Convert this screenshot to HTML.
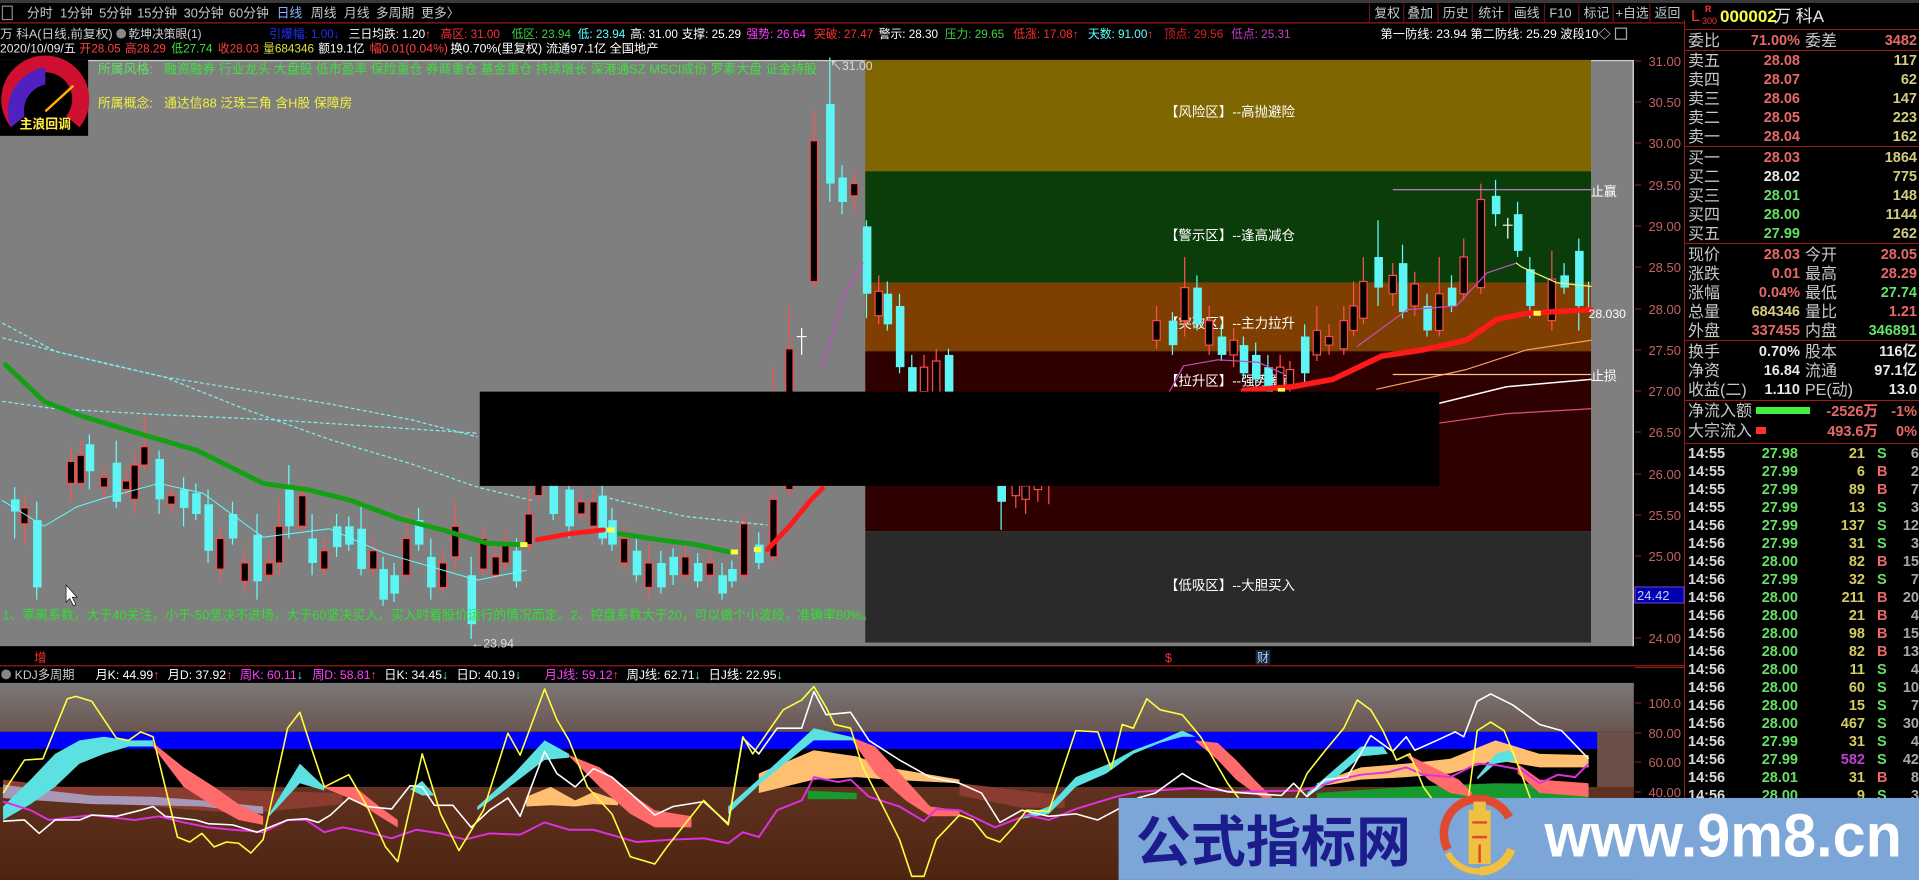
<!DOCTYPE html>
<html><head><meta charset="utf-8"><style>
html,body{margin:0;padding:0;background:#000;overflow:hidden}
svg{display:block}
text{font-family:"Liberation Sans","Noto Sans CJK SC",sans-serif}
.u{fill:#000;stroke:#ff4848;stroke-width:1}
.d{fill:#5ff5f5}
.lb{fill:#c8c8c8;font-size:16px}
.v{font-size:14.5px;font-weight:bold;text-anchor:end}
.r{fill:#e86868}.g{fill:#66e066}.y{fill:#d4cc80}.w{fill:#e8e8e8}
.ax{fill:#c86060;font-size:13px;text-anchor:end}
.t{font-size:14.5px;font-weight:bold}
</style></head><body>
<svg width="1919" height="880" viewBox="0 0 1919 880" xmlns="http://www.w3.org/2000/svg">
<rect width="1919" height="880" fill="#000"/>
<rect width="1919" height="3" fill="#3a3a3a"/>
<g transform="scale(1.22385)">
<!-- toolbar -->
<rect x="2" y="5" width="8" height="11" fill="none" stroke="#888" stroke-width="1"/>
<g font-size="10.5" fill="#c8c8c8">
<text x="22" y="14.5">分时</text><text x="49" y="14.5">1分钟</text><text x="81" y="14.5">5分钟</text><text x="112" y="14.5">15分钟</text><text x="150" y="14.5">30分钟</text><text x="187" y="14.5">60分钟</text><text x="226" y="14.5" fill="#8fb0ff">日线</text><text x="254" y="14.5">周线</text><text x="281" y="14.5">月线</text><text x="307" y="14.5">多周期</text><text x="344" y="14.5">更多〉</text>
<text x="1123" y="14.5">复权</text><text x="1150" y="14.5">叠加</text><text x="1179" y="14.5">历史</text><text x="1208" y="14.5">统计</text><text x="1237" y="14.5">画线</text><text x="1266" y="14.5">F10</text><text x="1294" y="14.5">标记</text><text x="1320" y="14.5">+自选</text><text x="1352" y="14.5">返回</text>
</g>
<g stroke="#701010" stroke-width="1"><path d="M1119 3V18M1147 3V18M1175 3V18M1203 3V18M1233 3V18M1262 3V18M1290 3V18M1318 3V18M1348 3V18"/></g>
<rect x="0" y="18.2" width="1377" height="1" fill="#a01818"/>
<!-- line 2 -->
<g font-size="9.6">
<text x="0" y="31" fill="#d0d0d0" textLength="92" lengthAdjust="spacingAndGlyphs">万 科A(日线,前复权)</text>
<circle cx="99" cy="27.5" r="4" fill="#888"/>
<text x="105" y="31" fill="#d0d0d0">乾坤决策眼(1)</text>
<text x="220" y="31" fill="#2030ff">引爆幅: 1.00↓</text>
<text x="285" y="31" fill="#fff">三日均跌: 1.20<tspan fill="#ff4040">↑</tspan></text>
<text x="360" y="31" fill="#ff3030">高区: 31.00</text>
<text x="418" y="31" fill="#40d040">低区: 23.94</text>
<text x="472" y="31" fill="#60ffff">低: 23.94</text>
<text x="515" y="31" fill="#fff">高: 31.00</text>
<text x="557" y="31" fill="#fff">支撑: 25.29</text>
<text x="610" y="31" fill="#ff40ff">强势: 26.64</text>
<text x="665" y="31" fill="#ff3030">突破: 27.47</text>
<text x="718" y="31" fill="#fff">警示: 28.30</text>
<text x="772" y="31" fill="#40d040">压力: 29.65</text>
<text x="828" y="31" fill="#ff3030">低涨: 17.08↑</text>
<text x="889" y="31" fill="#60ffff">天数: 91.00<tspan fill="#ff4040">↑</tspan></text>
<text x="951" y="31" fill="#e02020">顶点: 29.56</text>
<text x="1006" y="31" fill="#c040c0">低点: 25.31</text>
<text x="1128" y="31" fill="#fff" textLength="188" lengthAdjust="spacingAndGlyphs">第一防线: 23.94 第二防线: 25.29 波段10◇</text>
<rect x="1320" y="23" width="9" height="9" fill="none" stroke="#aaa"/>
</g>
<!-- line 3 -->
<g font-size="9.6">
<text x="0" y="43" fill="#e8e8e8" textLength="62" lengthAdjust="spacingAndGlyphs">2020/10/09/五</text>
<text x="65" y="43" fill="#ff4040">开28.05</text>
<text x="102" y="43" fill="#ff4040">高28.29</text>
<text x="140" y="43" fill="#40e040">低27.74</text>
<text x="178" y="43" fill="#ff4040">收28.03</text>
<text x="215" y="43" fill="#e0e040">量684346</text>
<text x="260" y="43" fill="#fff">额19.1亿</text>
<text x="302" y="43" fill="#ff4040" textLength="64" lengthAdjust="spacingAndGlyphs">幅0.01(0.04%)</text>
<text x="368" y="43" fill="#fff" textLength="75" lengthAdjust="spacingAndGlyphs">换0.70%(里复权)</text>
<text x="446" y="43" fill="#fff" textLength="92" lengthAdjust="spacingAndGlyphs">流通97.1亿 全国地产</text>
</g>
<!-- chart background -->
<rect x="0" y="49" width="1335" height="479" fill="#7f7f7f"/>
<rect x="0" y="49" width="1335" height="1" fill="#ccc"/>
<rect x="1334" y="49" width="1" height="479" fill="#ddd"/>
<rect x="0" y="49" width="72" height="62" fill="#000"/>
<!-- zones -->
<rect x="707" y="49" width="593" height="122" fill="#7f6600"/>
<rect x="707" y="140" width="593" height="91" fill="#0b3d0b"/>
<rect x="707" y="231" width="593" height="56" fill="#7f3f00"/>
<rect x="707" y="287" width="593" height="147" fill="#2e0000"/>
<rect x="707" y="434" width="593" height="91" fill="#2a2a2a"/>
<g fill="#fff" font-size="11" text-anchor="middle">
<text x="1005" y="95">【风险区】--高抛避险</text>
<text x="1005" y="196">【警示区】--逢高减仓</text>
<text x="1005" y="268">【突破区】--主力拉升</text>
<text x="1005" y="315">【拉升区】--强势蓄锐</text>
<text x="1005" y="482">【低吸区】--大胆买入</text>
</g>
<!-- dashed lines -->
<g fill="none" stroke="#7ff0f0" stroke-width="1" stroke-dasharray="3,2">
<polyline points="2,264 45,287 90,298 134,308 202,319 269,330 336,343 390,357"/>
<polyline points="2,276 45,287 134,308 202,335 269,359 336,379 390,398 435,409"/>
<polyline points="2,328 45,334 134,339 224,343 314,349 390,354"/>
<polyline points="493,406 560,422 627,429"/>
</g>
<!-- texts in chart -->
<text x="80" y="60" font-size="10.5" fill="#60e060">所属风格:</text>
<text x="134" y="60" font-size="10.5" fill="#40e040">融资融券 行业龙头 大盘股 低市盈率 保险重仓 券商重仓 基金重仓 持续增长 深港通SZ MSCI成份 罗素大盘 证金持股</text>
<text x="80" y="88" font-size="10.5" fill="#f0f040">所属概念:</text>
<text x="134" y="88" font-size="10.5" fill="#f0f040">通达信88 泛珠三角 含H股 保障房</text>
<!-- gauge -->
<path d="M9 104 A36 36 0 1 1 65 104 L54 95 A22 22 0 1 0 20 95 Z" fill="#d01030"/>
<path d="M9 104 A36 36 0 0 1 37 55 L37 69 A22 22 0 0 0 20 95 Z" fill="#5020c0"/>
<path d="M37 91 L60 70" stroke="#ffb000" stroke-width="2"/>
<text x="37" y="105" font-size="10.5" fill="#ffee40" text-anchor="middle" font-weight="bold">主浪回调</text>
<!-- wicks -->
<path stroke="#ff5050" stroke-width="1" fill="none" d="M20 405V445M58 365V410M66 360V400M85 380V410M103 383V405M110 370V420M118 340V385M140 395V420M180 430V475M200 450V485M220 450V475M228 410V470M247 395V435M265 440V470M305 440V470M332 420V475M362 450V485M372 410V465M395 430V470M405 445V475M413 435V465M432 400V450M440 360V410M475 400V425M485 400V435M510 430V465M530 445V490M560 445V475M580 450V478M608 420V475M632 300V460M645 250V405M665 90V235M698 140V175M718 225V265M755 290V330M765 285V330M830 385V415M838 390V420M848 388V410M857 390V412M945 250V285M968 210V275M988 250V290M1008 268V300M1046 290V325M1054 295V320M1076 250V295M1086 265V290M1098 250V290M1106 230V275M1114 210V265M1138 215V250M1156 222V258M1176 210V275M1196 195V245M1210 150V240M1268 205V270"/>
<path stroke="#60ffff" stroke-width="1" fill="none" d="M12 398V440M30 410V490M73 355V400M95 360V415M130 368V420M150 390V430M160 395V425M170 400V460M190 410V445M210 420V490M236 380V440M255 420V470M275 420V455M285 422V450M295 410V470M313 455V495M322 460V492M342 415V450M352 440V490M385 455V522M422 440V480M452 385V425M465 390V440M492 395V445M500 415V450M520 440V475M540 450V485M550 448V478M570 452V480M590 460V490M598 458V480M620 435V465M678 47V165M688 135V175M708 180V260M725 230V270M735 240V305M745 290V330M775 285V345M818 380V433M958 255V290M978 225V270M998 265V295M1016 275V310M1026 280V315M1036 290V325M1066 265V315M1126 180V250M1146 200V260M1166 240V275M1186 225V255M1222 147V185M1240 165V210M1250 210V260M1278 215V240M1290 195V270M1298 230V255"/>
<path stroke="#fff" d="M655 268V290M651 275H659M1232 178V195M1228 184H1236" fill="none"/>
<!-- up candles -->
<g class="u">
<rect x="17" y="415" width="6" height="13"/><rect x="55" y="377" width="6" height="18"/><rect x="63" y="372" width="6" height="23"/><rect x="82" y="390" width="6" height="8"/><rect x="100" y="393" width="6" height="7"/><rect x="107" y="380" width="6" height="28"/><rect x="115" y="365" width="6" height="15"/><rect x="137" y="405" width="6" height="7"/><rect x="177" y="440" width="6" height="25"/><rect x="197" y="460" width="6" height="15"/><rect x="217" y="460" width="6" height="10"/><rect x="225" y="430" width="6" height="30"/><rect x="244" y="405" width="6" height="25"/><rect x="262" y="450" width="6" height="15"/><rect x="302" y="450" width="6" height="15"/><rect x="329" y="440" width="6" height="30"/><rect x="359" y="460" width="6" height="20"/><rect x="369" y="430" width="6" height="25"/><rect x="392" y="440" width="6" height="25"/><rect x="402" y="455" width="6" height="15"/><rect x="410" y="445" width="6" height="15"/><rect x="429" y="420" width="6" height="25"/><rect x="437" y="385" width="6" height="20"/><rect x="472" y="410" width="6" height="10"/><rect x="482" y="410" width="6" height="20"/><rect x="507" y="440" width="6" height="20"/><rect x="527" y="460" width="6" height="20"/><rect x="557" y="455" width="6" height="15"/><rect x="577" y="460" width="6" height="10"/><rect x="605" y="428" width="6" height="42"/><rect x="629" y="408" width="6" height="47"/><rect x="642" y="285" width="6" height="115"/><rect x="662" y="115" width="6" height="115"/><rect x="695" y="150" width="6" height="10"/><rect x="715" y="238" width="6" height="20"/><rect x="752" y="300" width="6" height="20"/><rect x="762" y="295" width="6" height="30"/><rect x="827" y="395" width="6" height="10"/><rect x="835" y="397" width="6" height="11"/><rect x="845" y="395" width="6" height="5"/>
<rect x="942" y="262" width="6" height="16"/><rect x="965" y="235" width="6" height="27"/><rect x="985" y="262" width="6" height="20"/><rect x="1005" y="278" width="6" height="12"/><rect x="1043" y="300" width="6" height="18"/><rect x="1051" y="302" width="6" height="13"/><rect x="1073" y="270" width="6" height="20"/><rect x="1083" y="275" width="6" height="7"/><rect x="1095" y="262" width="6" height="23"/><rect x="1103" y="250" width="6" height="20"/><rect x="1111" y="230" width="6" height="30"/><rect x="1135" y="225" width="6" height="15"/><rect x="1153" y="232" width="6" height="18"/><rect x="1173" y="240" width="6" height="30"/><rect x="1193" y="210" width="6" height="30"/><rect x="1207" y="163" width="6" height="72"/><rect x="1265" y="228" width="6" height="34"/>
</g>
<!-- down candles -->
<g class="d">
<rect x="9" y="408" width="7" height="10"/><rect x="27" y="425" width="7" height="55"/><rect x="70" y="363" width="7" height="22"/><rect x="92" y="378" width="7" height="32"/><rect x="127" y="375" width="7" height="33"/><rect x="147" y="400" width="7" height="15"/><rect x="157" y="403" width="7" height="17"/><rect x="167" y="412" width="7" height="38"/><rect x="187" y="420" width="7" height="20"/><rect x="207" y="437" width="7" height="38"/><rect x="233" y="400" width="7" height="30"/><rect x="252" y="440" width="7" height="20"/><rect x="272" y="430" width="7" height="17"/><rect x="282" y="430" width="7" height="15"/><rect x="292" y="432" width="7" height="33"/><rect x="310" y="465" width="7" height="25"/><rect x="319" y="470" width="7" height="15"/><rect x="339" y="425" width="7" height="20"/><rect x="349" y="455" width="7" height="25"/><rect x="382" y="470" width="7" height="40"/><rect x="419" y="450" width="7" height="25"/><rect x="449" y="395" width="7" height="25"/><rect x="462" y="400" width="7" height="30"/><rect x="489" y="405" width="7" height="35"/><rect x="497" y="425" width="7" height="20"/><rect x="517" y="450" width="7" height="20"/><rect x="537" y="460" width="7" height="20"/><rect x="547" y="455" width="7" height="15"/><rect x="567" y="460" width="7" height="15"/><rect x="587" y="470" width="7" height="15"/><rect x="595" y="465" width="7" height="10"/><rect x="617" y="445" width="7" height="15"/><rect x="675" y="85" width="7" height="65"/><rect x="685" y="145" width="7" height="20"/><rect x="705" y="185" width="7" height="55"/><rect x="722" y="240" width="7" height="25"/><rect x="732" y="250" width="7" height="50"/><rect x="742" y="300" width="7" height="20"/><rect x="772" y="290" width="7" height="50"/><rect x="815" y="397" width="7" height="13"/>
<rect x="955" y="262" width="7" height="20"/><rect x="975" y="235" width="7" height="30"/><rect x="995" y="275" width="7" height="15"/><rect x="1013" y="282" width="7" height="23"/><rect x="1023" y="290" width="7" height="20"/><rect x="1033" y="300" width="7" height="20"/><rect x="1063" y="275" width="7" height="30"/><rect x="1123" y="210" width="7" height="25"/><rect x="1143" y="215" width="7" height="40"/><rect x="1163" y="250" width="7" height="20"/><rect x="1183" y="235" width="7" height="15"/><rect x="1219" y="160" width="7" height="15"/><rect x="1237" y="175" width="7" height="30"/><rect x="1247" y="220" width="7" height="30"/><rect x="1275" y="225" width="7" height="10"/><rect x="1287" y="205" width="7" height="45"/>
</g>
<!-- MA lines -->
<g fill="none" stroke-linejoin="round" stroke-linecap="round">
<polyline stroke="#60ffff" stroke-width="0.8" points="2,409 36,430 63,414 85,407 130,395 166,403 215,439 269,432 314,452 390,474 430,466"/>
<polyline stroke="#c050c0" stroke-width="1" points="955,321 967,299 995,294 1028,296 1048,305"/>
<polyline stroke="#c050c0" stroke-width="1" points="1109,283 1150,253 1190,250 1215,223 1239,215"/>
<polyline stroke="#f0f080" stroke-width="1" points="1239,215 1243,218 1272,231 1300,234"/>
<polyline stroke="#f0a060" stroke-width="1" points="1125,318 1198,302 1247,286 1300,278"/>
<polyline stroke="#ffffff" stroke-width="1.2" points="1174,330 1231,316 1300,310"/>
<polyline stroke="#e05080" stroke-width="1" points="1174,346 1231,338 1300,334"/>
<polyline stroke="#c050c0" stroke-width="1.2" points="672,300 690,240 705,215"/>
<polyline stroke="#14a014" stroke-width="4" points="4.5,298 36,328 67,340 116,355 161,368 215,395 251,400 287,409 327,424 358,432 399,444 426,445"/>
<polyline stroke="#ff1a1a" stroke-width="4" points="439,441 466,436 493,433"/>
<polyline stroke="#14a014" stroke-width="4" points="506,436 538,441 569,445 596,451"/>
<polyline stroke="#ff1a1a" stroke-width="4" points="627,449 645,430 663,408 672,399"/>
<polyline stroke="#ff1a1a" stroke-width="4.5" points="1016,319 1056,316 1089,310 1129,291 1162,286 1198,278 1223,261 1247,256 1300,253"/>
</g>
<g fill="#ffff40"><rect x="425" y="443" width="6" height="4"/><rect x="597" y="449" width="6" height="4"/><rect x="616" y="447" width="6" height="4"/><rect x="1253" y="254" width="6" height="4"/><rect x="1044" y="317" width="6" height="4"/><rect x="496" y="431" width="6" height="4"/></g>
<line x1="1138" y1="155" x2="1300" y2="155" stroke="#d080d0"/>
<line x1="1138" y1="306" x2="1300" y2="306" stroke="#ffc080"/>
<text x="1300" y="160" font-size="10.5" fill="#fff">止赢</text>
<text x="1300" y="311" font-size="10.5" fill="#fff">止损</text>
<text x="1298" y="260" font-size="10" fill="#fff">28.030</text>
<text x="678" y="57" font-size="10" fill="#ddd">↖31.00</text>
<text x="385" y="529" font-size="10" fill="#ddd">←23.94</text>
<!-- overlay -->
<rect x="392" y="320" width="784" height="77" fill="#000"/>
<text x="2" y="506" font-size="10.5" fill="#30e030">1、乖离系数，大于40关注，小于-50坚决不进场，大于60坚决买入，买入时看股价运行的情况而定。2、控盘系数大于20，可以做个小波段，准确率80%。</text>
<path d="M54 478 L54 492 L57 489 L60 495 L62 494 L59 488 L63 488 Z" fill="#fff" stroke="#000" stroke-width="0.5"/>
<!-- bottom strip -->
<text x="28" y="541" font-size="10" fill="#ff3030">增</text>
<text x="952" y="541" font-size="10" fill="#ff3030">$</text>
<rect x="1026" y="531" width="12" height="12" fill="#1a2a3a"/>
<text x="1027" y="541" font-size="10" fill="#a0d0ff">财</text>
<rect x="0" y="543.5" width="1377" height="1" fill="#a01818"/>
<!-- KDJ header -->
<g font-size="10">
<circle cx="5" cy="551" r="4" fill="#888"/>
<text x="12" y="555" fill="#c8c8c8">KDJ多周期</text>
<text x="78" y="555" fill="#fff">月K: 44.99<tspan fill="#ff4040">↑</tspan></text>
<text x="137" y="555" fill="#fff">月D: 37.92<tspan fill="#ff4040">↑</tspan></text>
<text x="196" y="555" fill="#ff40ff">周K: 60.11<tspan fill="#60ffff">↓</tspan></text>
<text x="255" y="555" fill="#ff40ff">周D: 58.81<tspan fill="#ff4040">↑</tspan></text>
<text x="314" y="555" fill="#fff">日K: 34.45<tspan fill="#60ffff">↓</tspan></text>
<text x="373" y="555" fill="#fff">日D: 40.19<tspan fill="#60ffff">↓</tspan></text>
<text x="445" y="555" fill="#ff40ff">月J线: 59.12<tspan fill="#ff4040">↑</tspan></text>
<text x="512" y="555" fill="#fff">周J线: 62.71<tspan fill="#60ffff">↓</tspan></text>
<text x="579" y="555" fill="#fff">日J线: 22.95<tspan fill="#60ffff">↓</tspan></text>
</g>
<!-- KDJ panel -->
<defs>
<linearGradient id="kg" x1="0" y1="0" x2="0" y2="1"><stop offset="0" stop-color="#7b7878"/><stop offset="1" stop-color="#6a5650"/></linearGradient>
<linearGradient id="kb" x1="0" y1="0" x2="0" y2="1"><stop offset="0" stop-color="#6a3a28"/><stop offset="1" stop-color="#4e2410"/></linearGradient>
</defs>
<rect x="0" y="558" width="1335" height="40" fill="url(#kg)"/>
<rect x="0" y="598" width="1335" height="121" fill="url(#kb)"/>
<rect x="1305" y="598" width="30" height="45" fill="#6a5048"/>
<rect x="0" y="598" width="1305" height="14" fill="#0000ff"/>
<rect x="0" y="612" width="1305" height="31" fill="#000"/>
<g stroke="none">
<polygon fill="#8a3c30" points="2.5,637 50,643 125,643 200,646 280,648 280,657 200,665 125,659 50,654 2.5,651"/>
<polygon fill="#8a3c30" points="784,640 835,646 870,650 870,660 835,660 784,650"/>
<polygon fill="#a898b8" points="2.5,641 30,645 75,650 125,651 165,654 215,659 215,665 165,659 125,658 75,657 30,654 2.5,652"/>
<polygon fill="#169a30" points="1076,648 1149,643 1222,640 1298,641 1298,654 1076,654"/>
<polygon fill="#169a30" points="660,646 700,648 700,653 660,653"/>
<polygon fill="#ffbf70" points="620,632 665,613 700,618 725,627 784,637 784,640 725,637 700,635 665,637 620,648"/>
<polygon fill="#ffbf70" points="430,651 450,643 470,654 485,647 505,654 505,658 485,657 470,659 450,658 430,659"/>
<polygon fill="#ffbf70" points="1076,640 1112,627 1149,624 1185,620 1222,605 1258,616 1298,617 1298,627 1258,627 1222,621 1185,632 1149,635 1112,637 1076,643"/>
<polygon fill="#ff6a6a" points="125,607 150,627 175,643 195,657 215,667 215,674 195,670 175,659 150,643 125,610"/>
<polygon fill="#ff6a6a" points="265,643 290,643 310,659 325,670 325,676 310,667 290,654 265,644"/>
<polygon fill="#ff6a6a" points="465,617 490,627 515,648 535,662 565,667 565,676 535,676 515,665 490,643 465,618"/>
<polygon fill="#ff6a6a" points="695,602 715,610 740,637 760,659 784,662 784,667 760,667 740,654 715,632 695,603"/>
<polygon fill="#ff6a6a" points="977,605 995,607 1010,621 1025,637 1039,651 1039,656 1025,648 1010,637 995,621 977,606"/>
<polygon fill="#ff6a6a" points="1149,616 1171,627 1192,637 1203,648 1203,651 1185,648 1167,637 1149,617"/>
<polygon fill="#ff6a6a" points="1240,624 1258,637 1298,640 1298,651 1258,648 1240,632"/>
<polygon fill="#5ce0e0" points="2.5,659 25,637 45,616 65,605 85,602 105,605 125,605 125,610 105,610 85,616 65,624 45,643 25,657 2.5,670"/>
<polygon fill="#5ce0e0" points="220,665 245,624 265,643 265,646 245,640 220,667"/>
<polygon fill="#5ce0e0" points="335,645 345,638 355,650 345,650"/>
<polygon fill="#5ce0e0" points="390,659 420,632 445,605 465,616 465,619 445,621 420,640 390,662"/>
<polygon fill="#5ce0e0" points="595,659 625,632 665,595 695,602 700,605 665,605 625,637 595,665"/>
<polygon fill="#5ce0e0" points="835,667 857,659 879,635 904,625 926,613 948,605 966,597 977,602 966,602 948,607 926,616 904,632 879,643 857,665 835,669"/>
<polygon fill="#5ce0e0" points="1068,648 1090,629 1112,610 1130,610 1134,616 1112,618 1090,637 1068,651"/>
<polygon fill="#5ce0e0" points="1207,635 1222,616 1233,613 1240,621 1222,624 1207,637"/>
</g>
<g fill="none" stroke-width="1.3" stroke-linejoin="round">
<polyline stroke="#e030e0" stroke-width="1.6" points="2.5,655 25,662 40,670 75,666 110,670 130,667 150,672 170,676 190,678 215,680 235,670 250,670 265,680 280,676 300,680 320,685 340,678 360,681 380,686 400,681 425,682 445,672 465,678 485,678 520,688 550,686 575,685 595,689 607,680 620,684 635,662 655,654 665,635 685,639 695,637 710,651 735,659 755,671 765,661 784,662 813,676 839,666 857,670 879,661 912,651 930,647 944,646 974,644 1010,647 1061,646 1076,643 1094,637 1112,633 1134,631 1149,627 1163,633 1185,635 1207,624 1222,625 1243,629 1258,640 1273,633 1287,635 1298,624"/>
<polyline stroke="#ffffff" points="2.5,671 20,670 32,681 45,670 65,670 75,666 95,667 115,662 125,659 135,667 160,670 170,673 190,674 210,680 220,676 235,670 250,669 260,672 270,666 285,652 300,659 320,661 335,642 345,643 355,658 370,658 385,676 400,662 415,652 425,667 445,614 455,632 470,643 485,628 500,635 515,648 535,666 550,659 575,655 595,673 607,603 620,616 635,595 655,595 665,565 675,584 695,582 710,605 735,621 760,635 784,640 802,648 817,672 835,662 857,667 879,665 897,670 912,662 930,652 944,648 966,632 974,637 988,643 1003,647 1047,650 1057,640 1068,651 1083,637 1101,635 1120,601 1138,614 1149,602 1156,613 1174,605 1189,598 1196,602 1207,573 1218,567 1236,576 1258,592 1276,597 1298,620"/>
<polyline stroke="#ffff40" points="2.5,648 20,621 35,620 55,571 62,569 75,573 95,603 105,605 115,598 125,602 145,684 155,688 165,681 175,692 185,688 195,689 205,697 215,686 235,595 245,582 255,613 265,643 285,633 300,659 315,692 325,704 345,616 360,665 375,695 395,662 415,599 425,617 445,563 455,588 465,605 480,643 500,665 515,700 535,706 545,692 575,654 595,674 607,602 615,616 640,580 655,572 665,561 675,578 682,592 695,595 705,627 720,656 735,686 745,716 755,716 765,686 784,666 795,670 806,684 817,688 828,676 839,662 857,663 879,597 897,598 908,628 917,592 926,595 937,571 948,580 966,584 981,602 992,621 1003,640 1018,660 1040,690 1060,650 1068,632 1083,613 1098,595 1109,572 1120,580 1130,597 1141,621 1152,616 1163,643 1171,654 1185,660 1200,651 1207,597 1218,590 1229,597 1243,632 1251,654 1265,690"/>
</g>
<!-- watermark -->
<rect x="914" y="652" width="654" height="67" fill="#7ca5d8"/>
<text x="928" y="704" font-size="45" font-weight="bold" fill="#1c1c8c" font-family="'Noto Sans CJK SC','WenQuanYi Zen Hei',sans-serif">公式指标网</text>
<path d="M1183 694 A28 28 0 0 1 1233 668" fill="none" stroke="#e04830" stroke-width="7"/>
<path d="M1235 694 A28 28 0 0 1 1209 712" fill="none" stroke="#f0c040" stroke-width="7"/>
<path d="M1209 712 A28 28 0 0 1 1183 697" fill="none" stroke="#f0c040" stroke-width="5"/>
<rect x="1200" y="662" width="18" height="44" fill="#f0c040"/>
<rect x="1204" y="655" width="10" height="8" fill="#f0c040"/>
<path d="M1203 672H1215M1203 684H1215M1209 690V705" stroke="#e04830" stroke-width="2"/>
</g>
<!-- axis column -->
<rect x="1684" y="20" width="1" height="860" fill="#a01818"/>
<g class="ax">
<text x="1681" y="66">31.00</text><text x="1681" y="107">30.50</text><text x="1681" y="148">30.00</text><text x="1681" y="190">29.50</text><text x="1681" y="231">29.00</text><text x="1681" y="272">28.50</text><text x="1681" y="314">28.00</text><text x="1681" y="355">27.50</text><text x="1681" y="396">27.00</text><text x="1681" y="437">26.50</text><text x="1681" y="479">26.00</text><text x="1681" y="520">25.50</text><text x="1681" y="561">25.00</text><text x="1681" y="643">24.00</text>
<text x="1681" y="708">100.0</text><text x="1681" y="738">80.00</text><text x="1681" y="767">60.00</text><text x="1681" y="797">40.00</text>
</g>
<g stroke="#a02020"><path d="M1635 61H1641M1635 102H1641M1635 143H1641M1635 185H1641M1635 226H1641M1635 267H1641M1635 309H1641M1635 350H1641M1635 391H1641M1635 432H1641M1635 474H1641M1635 515H1641M1635 556H1641M1635 638H1641M1635 703H1641M1635 733H1641M1635 762H1641M1635 792H1641"/></g>
<rect x="1635" y="587" width="49" height="16" fill="#0000b0" stroke="#8040c0"/>
<text x="1637" y="600" font-size="13" fill="#c0d0ff">24.42</text>
<rect x="1635" y="667" width="50" height="1" fill="#a01818"/>
<!-- right panel -->
<g fill="#a01818">
<rect x="1685" y="29" width="234" height="1"/><rect x="1685" y="50" width="234" height="1"/><rect x="1685" y="146" width="234" height="1"/><rect x="1685" y="243" width="234" height="1"/><rect x="1685" y="340" width="234" height="1"/><rect x="1685" y="400" width="234" height="1"/><rect x="1685" y="443" width="234" height="1"/>
</g>
<text x="1691" y="21" font-size="16" fill="#ff3030">L</text>
<text x="1705" y="12" font-size="9" fill="#ff3030" font-weight="bold">R</text>
<text x="1702" y="24" font-size="9" fill="#ff3030">300</text>
<text x="1720" y="22" font-size="17" font-weight="bold" fill="#ffff40">000002</text>
<text x="1774" y="22" font-size="17" fill="#e8e8e8">万 科A</text>
<g class="lb">
<text x="1688" y="46">委比</text><text x="1805" y="46">委差</text>
<text x="1688" y="66">卖五</text><text x="1688" y="85">卖四</text><text x="1688" y="104">卖三</text><text x="1688" y="123">卖二</text><text x="1688" y="142">卖一</text>
<text x="1688" y="163">买一</text><text x="1688" y="182">买二</text><text x="1688" y="201">买三</text><text x="1688" y="220">买四</text><text x="1688" y="239">买五</text>
<text x="1688" y="260">现价</text><text x="1688" y="279">涨跌</text><text x="1688" y="298">涨幅</text><text x="1688" y="317">总量</text><text x="1688" y="336">外盘</text>
<text x="1805" y="260">今开</text><text x="1805" y="279">最高</text><text x="1805" y="298">最低</text><text x="1805" y="317">量比</text><text x="1805" y="336">内盘</text>
<text x="1688" y="357">换手</text><text x="1688" y="376">净资</text><text x="1688" y="395">收益(二)</text>
<text x="1805" y="357">股本</text><text x="1805" y="376">流通</text><text x="1805" y="395">PE(动)</text>
<text x="1688" y="416">净流入额</text><text x="1688" y="436">大宗流入</text>
</g>
<g class="v">
<text x="1800" y="45" class="r">71.00%</text><text x="1917" y="45" class="r">3482</text>
<text x="1800" y="65" class="r">28.08</text><text x="1917" y="65" class="y">117</text>
<text x="1800" y="84" class="r">28.07</text><text x="1917" y="84" class="y">62</text>
<text x="1800" y="103" class="r">28.06</text><text x="1917" y="103" class="y">147</text>
<text x="1800" y="122" class="r">28.05</text><text x="1917" y="122" class="y">223</text>
<text x="1800" y="141" class="r">28.04</text><text x="1917" y="141" class="y">162</text>
<text x="1800" y="162" class="r">28.03</text><text x="1917" y="162" class="y">1864</text>
<text x="1800" y="181" class="w">28.02</text><text x="1917" y="181" class="y">775</text>
<text x="1800" y="200" class="g">28.01</text><text x="1917" y="200" class="y">148</text>
<text x="1800" y="219" class="g">28.00</text><text x="1917" y="219" class="y">1144</text>
<text x="1800" y="238" class="g">27.99</text><text x="1917" y="238" class="y">262</text>
<text x="1800" y="259" class="r">28.03</text><text x="1917" y="259" class="r">28.05</text>
<text x="1800" y="278" class="r">0.01</text><text x="1917" y="278" class="r">28.29</text>
<text x="1800" y="297" class="r">0.04%</text><text x="1917" y="297" class="g">27.74</text>
<text x="1800" y="316" class="y">684346</text><text x="1917" y="316" class="r">1.21</text>
<text x="1800" y="335" class="r">337455</text><text x="1917" y="335" class="g">346891</text>
<text x="1800" y="356" class="w">0.70%</text><text x="1917" y="356" class="w">116亿</text>
<text x="1800" y="375" class="w">16.84</text><text x="1917" y="375" class="w">97.1亿</text>
<text x="1800" y="394" class="w">1.110</text><text x="1917" y="394" class="w">13.0</text>
<text x="1878" y="416" class="r">-2526万</text><text x="1917" y="416" class="r">-1%</text>
<text x="1878" y="436" class="r">493.6万</text><text x="1917" y="436" class="r">0%</text>
</g>
<rect x="1756" y="407" width="54" height="7" fill="#40f040"/>
<rect x="1756" y="427" width="10" height="7" fill="#ff3030"/>
<!-- ticks -->
<g class="t">
<g fill="#d8d8d8">
<text x="1688" y="458">14:55</text><text x="1688" y="476">14:55</text><text x="1688" y="494">14:55</text><text x="1688" y="512">14:55</text><text x="1688" y="530">14:56</text><text x="1688" y="548">14:56</text><text x="1688" y="566">14:56</text><text x="1688" y="584">14:56</text><text x="1688" y="602">14:56</text><text x="1688" y="620">14:56</text><text x="1688" y="638">14:56</text><text x="1688" y="656">14:56</text><text x="1688" y="674">14:56</text><text x="1688" y="692">14:56</text><text x="1688" y="710">14:56</text><text x="1688" y="728">14:56</text><text x="1688" y="746">14:56</text><text x="1688" y="764">14:56</text><text x="1688" y="782">14:56</text><text x="1688" y="800">14:56</text>
</g>
<g fill="#66e066" text-anchor="end">
<text x="1798" y="458">27.98</text><text x="1798" y="476">27.99</text><text x="1798" y="494">27.99</text><text x="1798" y="512">27.99</text><text x="1798" y="530">27.99</text><text x="1798" y="548">27.99</text><text x="1798" y="566">28.00</text><text x="1798" y="584">27.99</text><text x="1798" y="602">28.00</text><text x="1798" y="620">28.00</text><text x="1798" y="638">28.00</text><text x="1798" y="656">28.00</text><text x="1798" y="674">28.00</text><text x="1798" y="692">28.00</text><text x="1798" y="710">28.00</text><text x="1798" y="728">28.00</text><text x="1798" y="746">27.99</text><text x="1798" y="764">27.99</text><text x="1798" y="782">28.01</text><text x="1798" y="800">28.00</text>
</g>
<g fill="#d4cc60" text-anchor="end">
<text x="1865" y="458">21</text><text x="1865" y="476">6</text><text x="1865" y="494">89</text><text x="1865" y="512">13</text><text x="1865" y="530">137</text><text x="1865" y="548">31</text><text x="1865" y="566">82</text><text x="1865" y="584">32</text><text x="1865" y="602">211</text><text x="1865" y="620">21</text><text x="1865" y="638">98</text><text x="1865" y="656">82</text><text x="1865" y="674">11</text><text x="1865" y="692">60</text><text x="1865" y="710">15</text><text x="1865" y="728">467</text><text x="1865" y="746">31</text><text x="1865" y="764" fill="#c040d0">582</text><text x="1865" y="782">31</text><text x="1865" y="800">9</text>
</g>
<g>
<text x="1877" y="458" class="g">S</text><text x="1877" y="476" class="r">B</text><text x="1877" y="494" class="r">B</text><text x="1877" y="512" class="g">S</text><text x="1877" y="530" class="g">S</text><text x="1877" y="548" class="g">S</text><text x="1877" y="566" class="r">B</text><text x="1877" y="584" class="g">S</text><text x="1877" y="602" class="r">B</text><text x="1877" y="620" class="r">B</text><text x="1877" y="638" class="r">B</text><text x="1877" y="656" class="r">B</text><text x="1877" y="674" class="g">S</text><text x="1877" y="692" class="g">S</text><text x="1877" y="710" class="g">S</text><text x="1877" y="728" class="g">S</text><text x="1877" y="746" class="g">S</text><text x="1877" y="764" class="g">S</text><text x="1877" y="782" class="r">B</text><text x="1877" y="800" class="g">S</text>
</g>
<g fill="#a8a8a8" text-anchor="end">
<text x="1919" y="458">6</text><text x="1919" y="476">2</text><text x="1919" y="494">7</text><text x="1919" y="512">3</text><text x="1919" y="530">12</text><text x="1919" y="548">3</text><text x="1919" y="566">15</text><text x="1919" y="584">7</text><text x="1919" y="602">20</text><text x="1919" y="620">4</text><text x="1919" y="638">15</text><text x="1919" y="656">13</text><text x="1919" y="674">4</text><text x="1919" y="692">10</text><text x="1919" y="710">7</text><text x="1919" y="728">30</text><text x="1919" y="746">4</text><text x="1919" y="764">42</text><text x="1919" y="782">8</text><text x="1919" y="800">3</text>
</g>
</g>
<!-- watermark over right panel -->
<rect x="1635" y="798" width="284" height="82" fill="#7ca5d8"/>
<g transform="scale(1.22385)">
<text x="1262" y="700" font-size="50" font-weight="bold" fill="#fff" font-family="'DejaVu Serif','Liberation Serif',serif" textLength="292" lengthAdjust="spacingAndGlyphs">www.9m8.cn</text>
</g>
</svg>
</body></html>
